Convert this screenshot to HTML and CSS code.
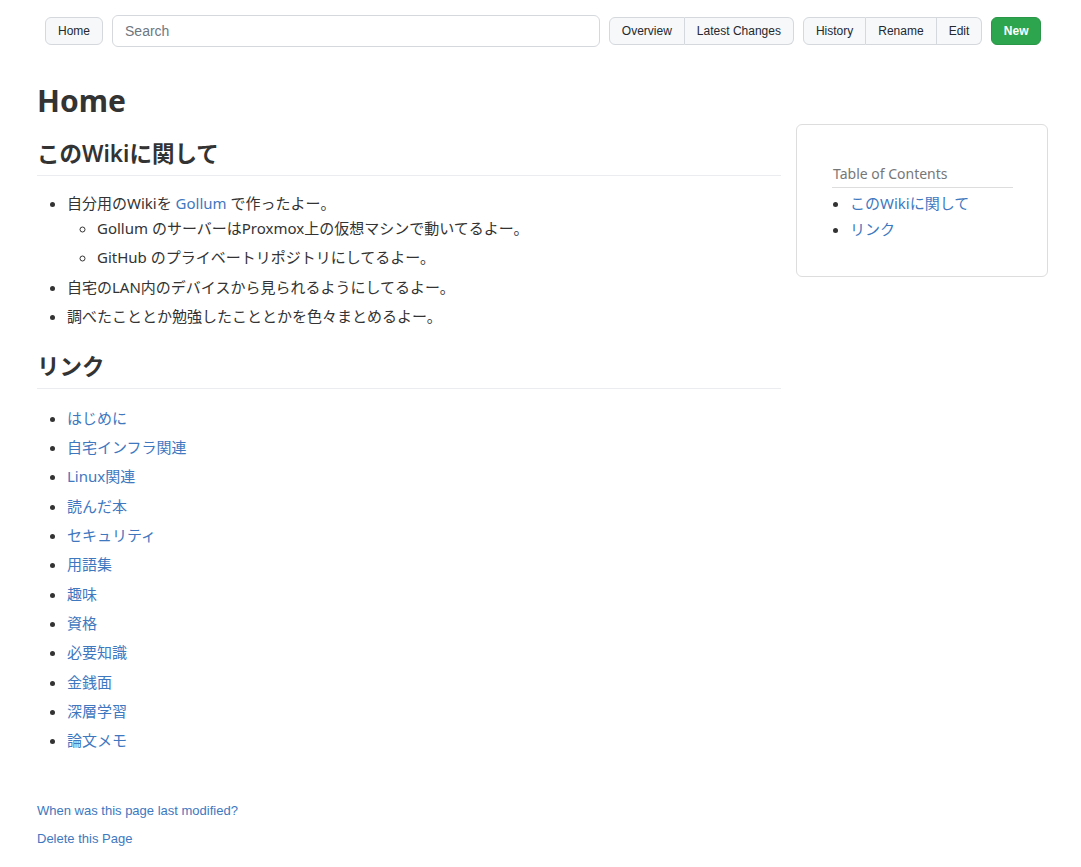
FILE: index.html
```html
<!DOCTYPE html>
<html>
<head>
    <title>Home</title>
    <link rel="stylesheet" href="styles.css">
</head>
<body>
    <div class="wrapper">
        <div class="navbar">
            <a class="btn" href="#">Home</a>
            <input class="search" type="text" placeholder="Search">
            <div class="btn-group">
                <a class="btn" href="#">Overview</a>
                <a class="btn" href="#">Latest Changes</a>
            </div>
            <div class="btn-group">
                <a class="btn" href="#">History</a>
                <a class="btn" href="#">Rename</a>
                <a class="btn" href="#">Edit</a>
            </div>
            <a class="btn btn-primary" href="#">New</a>
        </div>

        <h1 class="page-title">Home</h1>

        <div class="main">
            <div class="markdown-body">
                <h2>このWikiに関して</h2>
                <ul>
                    <li>自分用のWikiを <a href="#">Gollum</a> で作ったよー。
                        <ul>
                            <li>Gollum のサーバーはProxmox上の仮想マシンで動いてるよー。</li>
                            <li>GitHub のプライベートリポジトリにしてるよー。</li>
                        </ul>
                    </li>
                    <li>自宅のLAN内のデバイスから見られるようにしてるよー。</li>
                    <li>調べたこととか勉強したこととかを色々まとめるよー。</li>
                </ul>

                <h2>リンク</h2>
                <ul class="links">
                    <li><a href="#">はじめに</a></li>
                    <li><a href="#">自宅インフラ関連</a></li>
                    <li><a href="#">Linux関連</a></li>
                    <li><a href="#">読んだ本</a></li>
                    <li><a href="#">セキュリティ</a></li>
                    <li><a href="#">用語集</a></li>
                    <li><a href="#">趣味</a></li>
                    <li><a href="#">資格</a></li>
                    <li><a href="#">必要知識</a></li>
                    <li><a href="#">金銭面</a></li>
                    <li><a href="#">深層学習</a></li>
                    <li><a href="#">論文メモ</a></li>
                </ul>
            </div>

            <div class="toc-box">
                <div class="toc">
                    <div class="toc-title">Table of Contents</div>
                    <ul>
                        <li><a href="#">このWikiに関して</a></li>
                        <li><a href="#">リンク</a></li>
                    </ul>
                </div>
            </div>
        </div>

        <div class="footer">
            <p><a href="#">When was this page last modified?</a></p>
            <p><a href="#">Delete this Page</a></p>
        </div>
    </div>
</body>
</html>
```

FILE: styles.css
```css
body {
    margin: 0;
    background-color: #fff;
    color: #333;
    font-family: "Noto Sans", "Noto Sans CJK JP", sans-serif;
}
a {
    color: #4078c0;
    text-decoration: none;
}
.wrapper {
    width: 1011px;
    padding-left: 37px;
}
.navbar {
    display: flex;
    align-items: center;
    gap: 9px;
    margin: 0 7px 0 8px;
    padding-top: 15px;
}
.btn {
    display: inline-block;
    height: 28px;
    line-height: 26px;
    box-sizing: border-box;
    padding: 0 12px;
    border: 1px solid #d5d8dc;
    border-radius: 6px;
    background-color: #f6f8fa;
    color: #24292f;
    font-family: "Liberation Sans", Arial, sans-serif;
    font-size: 12px;
}
.btn-primary {
    background-color: #2da44e;
    border-color: #2a9647;
    color: #fff;
    font-weight: bold;
    padding: 0 11.5px;
}
.btn-group {
    display: flex;
}
.btn-group .btn {
    border-radius: 0;
}
.btn-group .btn + .btn {
    border-left: none;
}
.btn-group .btn:first-child {
    border-radius: 6px 0 0 6px;
}
.btn-group .btn:last-child {
    border-radius: 0 6px 6px 0;
}
.search {
    flex: 1;
    height: 32px;
    box-sizing: border-box;
    padding: 0 12px;
    border: 1px solid #d5d8dc;
    border-radius: 6px;
    font-family: "Liberation Sans", Arial, sans-serif;
    font-size: 14px;
    color: #333;
}
.search::placeholder {
    color: #6e7781;
}
.page-title {
    margin: 34px 0 0;
    font-size: 30px;
    line-height: 40px;
    font-weight: bold;
}
.main {
    display: flex;
    gap: 15px;
    align-items: flex-start;
}
.markdown-body {
    width: 744px;
    font-size: 15px;
}
.markdown-body h2 {
    margin: 17px 0 0;
    padding-bottom: 5px;
    font-size: 22.5px;
    line-height: 32px;
    font-weight: 600;
    border-bottom: 1px solid #eaecef;
}
.markdown-body ul {
    margin: 15px 0 0;
    padding-left: 30px;
}
.markdown-body ul ul {
    margin: 0;
}
.markdown-body ul ul li {
    list-style-type: circle;
}
.markdown-body li {
    line-height: 25px;
}
.markdown-body li + li {
    margin-top: 4.3px;
}
.markdown-body ul ul li:first-child {
    margin-top: 0;
}
.markdown-body > ul + h2 {
    margin-top: 22px;
}
.markdown-body ul.links {
    margin-top: 17px;
}
.toc-box {
    width: 252px;
    box-sizing: border-box;
    margin-top: 3px;
    padding: 38px 34px 34px 35px;
    border: 1px solid #ddd;
    border-radius: 6px;
}
.toc-title {
    color: #777;
    font-size: 14px;
    line-height: 22px;
    padding: 0 0 2px 1px;
    border-bottom: 1px solid #ddd;
}
.toc ul {
    margin: 2px 0 0;
    padding-left: 18px;
    font-size: 15px;
}
.toc li {
    line-height: 26px;
}
.footer {
    margin-top: 49px;
    font-family: "Liberation Sans", Arial, sans-serif;
    font-size: 13px;
}
.footer p {
    margin: 0 0 10px;
    line-height: 18px;
}
```
